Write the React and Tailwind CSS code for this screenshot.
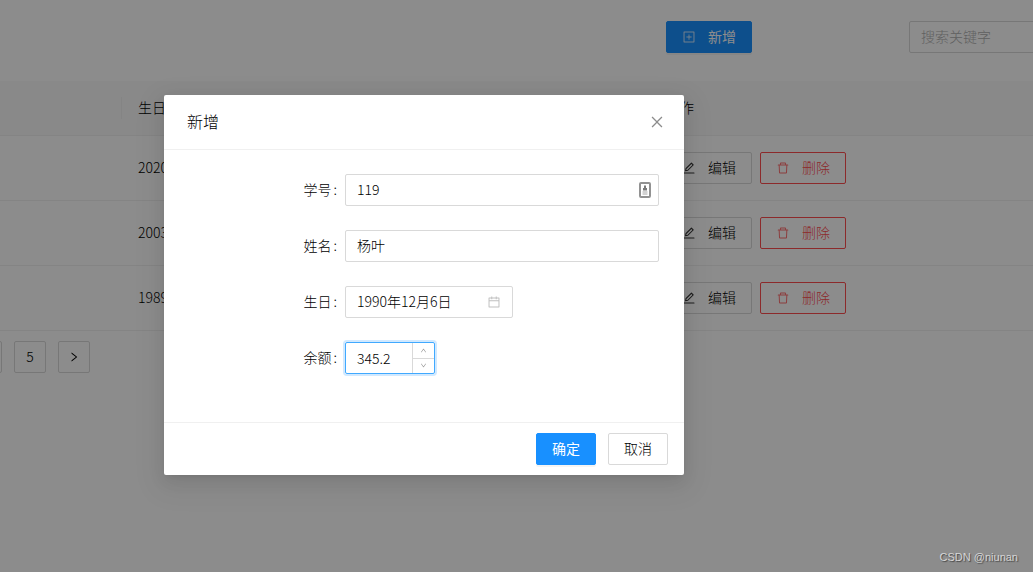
import { useState } from "react";
import {
  AiOutlineCalendar,
  AiOutlineClose,
  AiOutlineDelete,
  AiOutlineDown,
  AiOutlineEdit,
  AiOutlinePlusSquare,
  AiOutlineRight,
  AiOutlineUp,
} from "react-icons/ai";

const ROWS = [
  { id: 1, birthday: "2020年" },
  { id: 2, birthday: "2003年" },
  { id: 3, birthday: "1989年" },
];

const inputClass =
  "h-8 w-full rounded-xs border border-[#d9d9d9] bg-white px-[11px] pb-0.5 text-sm outline-none placeholder:text-[#b0b0b0]";

const buttonKinds = {
  primary:
    "border-[#1890ff] bg-[#1890ff] font-normal text-white shadow-[0_2px_0_rgba(0,0,0,0.045)]",
  normal: "border-[#d9d9d9] bg-white text-black",
  danger: "border-[#ff4d4f] bg-white text-[#ff4d4f]",
};

const Button = ({ kind = "normal", icon, children, ...rest }) => (
  <button
    type="button"
    className={`inline-flex h-8 shrink-0 items-center gap-3 rounded-xs border px-[15px] text-sm ${buttonKinds[kind]}`}
    {...rest}
  >
    {icon && <span className="opacity-80">{icon}</span>}
    <span className="pb-0.5">{children}</span>
  </button>
);

const PageButton = ({ children, ...rest }) => (
  <button
    type="button"
    className="flex size-8 shrink-0 items-center justify-center rounded-xs border border-[#d9d9d9] bg-white text-sm"
    {...rest}
  >
    {children}
  </button>
);

// label a la derecha, control a la izquierda (8 / 16 columnas)
const Field = ({ id, label, children }) => (
  <div className="grid grid-cols-3 items-center">
    <label htmlFor={id} className="pr-2 pb-0.5 text-right text-sm">
      {label}
      <span className="ml-0.5">:</span>
    </label>
    <div className="col-span-2">{children}</div>
  </div>
);

const ContactIcon = () => (
  <svg viewBox="0 0 12 16" width="12" height="16" aria-hidden="true">
    <rect x="1" y="1" width="10" height="14" rx="1" fill="#fff" stroke="#929292" strokeWidth="2" />
    <path d="M5 3.5h2V6h1v2.5H4V6h1z" fill="#7a7a7a" />
    <path d="M3.5 9.5h5v1h-5zM3.5 11.5h5v1h-5z" fill="#a6a6a6" />
  </svg>
);

const StudentTable = () => (
  <table className="w-full table-fixed border-collapse text-left text-sm">
    <thead>
      <tr className="h-[54px] border-b border-[#f0f0f0] bg-[#fafafa]">
        <td className="w-[122px]">
          <div className="h-[22px] border-r border-[#f0f0f0]" />
        </td>
        <th className="w-[528px] px-4 pb-0.5 font-light">生日</th>
        <th className="px-4 pb-0.5 font-light">操作</th>
      </tr>
    </thead>
    <tbody>
      {ROWS.map((row) => (
        <tr key={row.id} className="h-[65px] border-b border-[#f0f0f0]">
          <td />
          <td className="px-4 pb-0.5">{row.birthday}</td>
          <td className="px-4">
            <div className="flex gap-2">
              <Button icon={<AiOutlineEdit size={14} />}>编辑</Button>
              <Button kind="danger" icon={<AiOutlineDelete size={14} />}>
                删除
              </Button>
            </div>
          </td>
        </tr>
      ))}
    </tbody>
  </table>
);

const StudentModal = () => {
  const [form, setForm] = useState({
    no: "119",
    name: "杨叶",
    birthday: "1990年12月6日",
    balance: "345.2",
  });
  const set = (key) => (e) => setForm({ ...form, [key]: e.target.value });
  const step = (n) =>
    setForm({ ...form, balance: (Number(form.balance) + n).toFixed(1) });

  return (
    <div
      role="dialog"
      aria-modal="true"
      aria-labelledby="modal-title"
      className="w-full max-w-[520px] rounded-xs bg-white shadow-[0_3px_6px_-4px_rgba(0,0,0,0.12),0_6px_16px_rgba(0,0,0,0.08),0_9px_28px_8px_rgba(0,0,0,0.05)]"
    >
      <header className="flex h-[55px] items-center justify-between border-b border-[#f0f0f0] pr-[19px] pl-[23px]">
        <h2 id="modal-title" className="pb-0.5 text-base">新增</h2>
        <button type="button" aria-label="关闭" className="text-black/45">
          <AiOutlineClose size={16} />
        </button>
      </header>

      <form className="flex flex-col gap-6 pt-6 pr-[25px] pb-12 pl-6">
        <Field id="no" label="学号">
          <div className="relative">
            <input id="no" value={form.no} onChange={set("no")} className={inputClass} />
            <span className="absolute inset-y-0 right-2 flex items-center">
              <ContactIcon />
            </span>
          </div>
        </Field>
        <Field id="name" label="姓名">
          <input id="name" value={form.name} onChange={set("name")} className={inputClass} />
        </Field>
        <Field id="birthday" label="生日">
          <div className="flex h-8 w-[168px] items-center rounded-xs border border-[#d9d9d9] px-[11px]">
            <input
              id="birthday"
              value={form.birthday}
              onChange={set("birthday")}
              className="w-full min-w-0 pb-0.5 text-sm outline-none"
            />
            <AiOutlineCalendar size={14} className="shrink-0 text-black/25" />
          </div>
        </Field>
        <Field id="balance" label="余额">
          <div className="flex h-8 w-[90px] rounded-xs border border-[#40a9ff] shadow-[0_0_0_2px_rgba(24,144,255,0.2)]">
            <input
              id="balance"
              role="spinbutton"
              aria-valuenow={Number(form.balance)}
              value={form.balance}
              onChange={set("balance")}
              className="w-full min-w-0 pl-[11px] text-sm outline-none"
            />
            <div className="flex w-[22px] shrink-0 flex-col border-l border-[#d9d9d9] text-black/45">
              <button
                type="button"
                aria-label="增加"
                onClick={() => step(1)}
                className="flex flex-1 items-center justify-center"
              >
                <AiOutlineUp size={7} />
              </button>
              <button
                type="button"
                aria-label="减少"
                onClick={() => step(-1)}
                className="flex flex-1 items-center justify-center border-t border-[#d9d9d9]"
              >
                <AiOutlineDown size={7} />
              </button>
            </div>
          </div>
        </Field>
      </form>

      <footer className="flex justify-end gap-3 border-t border-[#f0f0f0] px-4 py-2.5">
        <Button kind="primary">确定</Button>
        <Button>取消</Button>
      </footer>
    </div>
  );
};

export default function App() {
  return (
    <div className="relative min-h-screen overflow-hidden bg-white font-['Noto_Sans_CJK_SC',sans-serif] font-light text-black">
      <div className="flex items-center gap-[157px] pt-[21px] pb-7 pl-[666px]">
        <Button kind="primary" icon={<AiOutlinePlusSquare size={14} />}>
          新增
        </Button>
        <div className="w-[200px] shrink-0">
          <input aria-label="搜索关键字" placeholder="搜索关键字" className={inputClass} />
        </div>
      </div>

      <StudentTable />

      <nav aria-label="分页" className="-ml-[30px] flex gap-3 pt-2.5">
        <PageButton aria-label="4" />
        <PageButton>
          <span className="pb-0.5">5</span>
        </PageButton>
        <PageButton aria-label="下一页">
          <AiOutlineRight size={12} />
        </PageButton>
      </nav>

      {/* máscara + modal */}
      <div className="absolute inset-0 bg-black/45 pt-[95px] pl-[164px]">
        <StudentModal />
      </div>

      <div className="absolute right-[15px] bottom-[7px] font-['Liberation_Sans',sans-serif] text-[11px] leading-4 font-normal text-white/70 [text-shadow:1px_1px_1px_rgba(0,0,0,0.5)]">
        CSDN @niunan
      </div>
    </div>
  );
}
